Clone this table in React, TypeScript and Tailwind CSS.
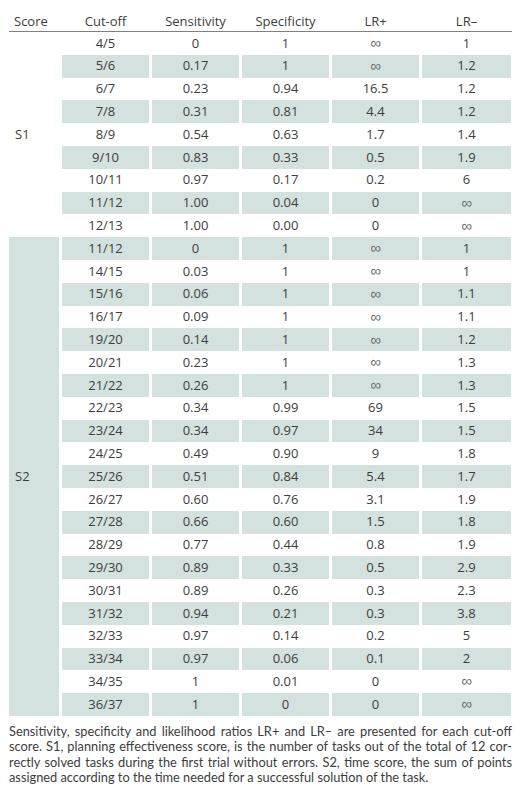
import React from 'react';

const s1 = [
  ['4/5', '0', '1', '∞', '1'],
  ['5/6', '0.17', '1', '∞', '1.2'],
  ['6/7', '0.23', '0.94', '16.5', '1.2'],
  ['7/8', '0.31', '0.81', '4.4', '1.2'],
  ['8/9', '0.54', '0.63', '1.7', '1.4'],
  ['9/10', '0.83', '0.33', '0.5', '1.9'],
  ['10/11', '0.97', '0.17', '0.2', '6'],
  ['11/12', '1.00', '0.04', '0', '∞'],
  ['12/13', '1.00', '0.00', '0', '∞'],
];

const s2 = [
  ['11/12', '0', '1', '∞', '1'],
  ['14/15', '0.03', '1', '∞', '1'],
  ['15/16', '0.06', '1', '∞', '1.1'],
  ['16/17', '0.09', '1', '∞', '1.1'],
  ['19/20', '0.14', '1', '∞', '1.2'],
  ['20/21', '0.23', '1', '∞', '1.3'],
  ['21/22', '0.26', '1', '∞', '1.3'],
  ['22/23', '0.34', '0.99', '69', '1.5'],
  ['23/24', '0.34', '0.97', '34', '1.5'],
  ['24/25', '0.49', '0.90', '9', '1.8'],
  ['25/26', '0.51', '0.84', '5.4', '1.7'],
  ['26/27', '0.60', '0.76', '3.1', '1.9'],
  ['27/28', '0.66', '0.60', '1.5', '1.8'],
  ['28/29', '0.77', '0.44', '0.8', '1.9'],
  ['29/30', '0.89', '0.33', '0.5', '2.9'],
  ['30/31', '0.89', '0.26', '0.3', '2.3'],
  ['31/32', '0.94', '0.21', '0.3', '3.8'],
  ['32/33', '0.97', '0.14', '0.2', '5'],
  ['33/34', '0.97', '0.06', '0.1', '2'],
  ['34/35', '1', '0.01', '0', '∞'],
  ['36/37', '1', '0', '0', '∞'],
];

const notes = [
  'Sensitivity, specificity and likelihood ratios LR+ and LR– are presented for each cut-off',
  'score. S1, planning effectiveness score, is the number of tasks out of the total of 12 cor-',
  'rectly solved tasks during the first trial without errors. S2, time score, the sum of points',
  'assigned according to the time needed for a successful solution of the task.',
];

const cols = 'grid grid-cols-[50px_87px_87px_87px_87px_89px] gap-x-[3px]';

function Cells({ row, shaded }: { row: string[]; shaded: boolean }) {
  return (
    <>
      {row.map((v, i) => (
        <div
          key={i}
          className={`flex items-center justify-center ${shaded ? 'bg-[#d3e2df]' : ''} ${
            v === '∞' ? "text-[#6e6e6e] text-[15px] font-['DejaVu_Sans',sans-serif] font-extralight" : ''
          }`}
        >
          {v}
        </div>
      ))}
    </>
  );
}

export default function App() {
  return (
    <div className="bg-white w-[521px] h-[800px] px-[9px] pt-[12px] text-[#3d3d3d] font-['Open_Sans','Noto_Sans',sans-serif]">
      {/* Header */}
      <div className={`${cols} h-[20px] border-b border-[#808080] text-[13px] leading-[18px]`}>
        <div className="pl-[5px]">Score</div>
        <div className="text-center">Cut-off</div>
        <div className="text-center">Sensitivity</div>
        <div className="text-center">Specificity</div>
        <div className="text-center">LR+</div>
        <div className="text-center">LR–</div>
      </div>

      {/* Body */}
      <div className={`${cols} auto-rows-[22.8px] text-[13px]`}>
        <div className="row-span-9 flex items-center pl-[6px]">S1</div>
        {s1.map((r, i) => (
          <Cells key={'a' + i} row={r} shaded={i % 2 === 1} />
        ))}
        <div className="row-span-21 flex items-center pl-[6px] bg-[#d3e2df]">S2</div>
        {s2.map((r, i) => (
          <Cells key={'b' + i} row={r} shaded={i % 2 === 0} />
        ))}
      </div>

      {/* Footnote */}
      <div className="mt-[8px] text-[12.8px] leading-[15.4px] font-['Lato','Open_Sans',sans-serif]">
        {notes.map((line, i) => (
          <div
            key={i}
            className={i < notes.length - 1 ? 'text-justify [text-align-last:justify]' : ''}
          >
            {line}
          </div>
        ))}
      </div>
    </div>
  );
}
